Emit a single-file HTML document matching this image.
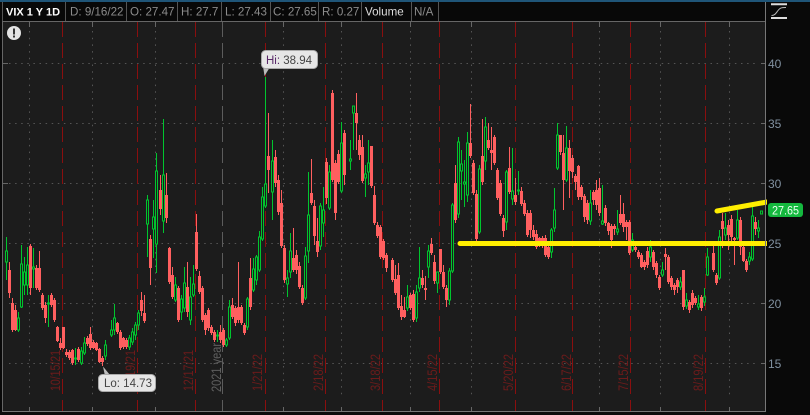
<!DOCTYPE html>
<html><head><meta charset="utf-8"><style>
html,body{margin:0;padding:0;background:#0a0a0a}
#w{position:relative;width:810px;height:415px;overflow:hidden;background:#0a0a0a;font-family:"Liberation Sans",sans-serif}
svg{position:absolute;left:0;top:0}
</style></head><body><div id="w">
<svg width="810" height="415" viewBox="0 0 810 415" font-family="Liberation Sans, sans-serif">
<rect x="0" y="0" width="810" height="415" fill="#090909"/>
<rect x="0" y="0" width="810" height="2" fill="#1f5578"/>
<rect x="3" y="22" width="762" height="389" fill="#1c1c1c"/>
<rect x="0" y="411" width="766" height="4" fill="#0c0c0c"/>
<g stroke="#555" stroke-width="1" stroke-dasharray="1.5 5.2" fill="none">
<path d="M29.5 31V398M92.5 31V398M155.5 31V398M283.5 31V398M341.5 31V398M410.5 31V398M471.5 31V398M599.5 31V398M660.5 31V398M729.5 31V398"/>
<path stroke-dasharray="1.5 4.6" d="M9 63.5H756M9 123.5H756M9 183.5H756M9 243.5H756M9 303.5H756M9 363.5H756"/>
</g>
<path stroke="#666" fill="none" d="M29.5 22V27M92.5 22V27M155.5 22V27M283.5 22V27M341.5 22V27M410.5 22V27M471.5 22V27M599.5 22V27M660.5 22V27M729.5 22V27M29.5 407V411M92.5 407V411M155.5 407V411M283.5 407V411M341.5 407V411M410.5 407V411M471.5 407V411M599.5 407V411M660.5 407V411M729.5 407V411M3 183.5H8M3 63.5H8M761 63.5H765M761 123.5H765M761 183.5H765M761 243.5H765M761 303.5H765M761 363.5H765"/>
<g stroke="#8a0f0f" stroke-width="1" stroke-dasharray="15 6" fill="none">
<path d="M62.5 22V411M137.5 22V411M195.5 22V411M265.5 22V411M325.5 22V411M382.5 22V411M439.5 22V411M515.5 22V411M572.5 22V411M630.5 22V411M705.5 22V411"/>
<path stroke="#5c5c5c" d="M222.5 22V411"/>
</g>
<g font-size="13.5" fill="#6c1b1b" text-anchor="start">
<text transform="translate(60,391) rotate(-90)" textLength="41" lengthAdjust="spacingAndGlyphs">10/15/21</text>
<text transform="translate(135,391) rotate(-90)" textLength="41" lengthAdjust="spacingAndGlyphs">11/19/21</text>
<text transform="translate(193,391) rotate(-90)" textLength="41" lengthAdjust="spacingAndGlyphs">12/17/21</text>
<text transform="translate(221,392) rotate(-90)" fill="#5f5f5f" textLength="49" lengthAdjust="spacingAndGlyphs">2021 year</text>
<text transform="translate(262,391) rotate(-90)" textLength="37" lengthAdjust="spacingAndGlyphs">1/21/22</text>
<text transform="translate(323,391) rotate(-90)" textLength="37" lengthAdjust="spacingAndGlyphs">2/18/22</text>
<text transform="translate(380,391) rotate(-90)" textLength="37" lengthAdjust="spacingAndGlyphs">3/18/22</text>
<text transform="translate(437,391) rotate(-90)" textLength="37" lengthAdjust="spacingAndGlyphs">4/15/22</text>
<text transform="translate(513,391) rotate(-90)" textLength="37" lengthAdjust="spacingAndGlyphs">5/20/22</text>
<text transform="translate(571,391) rotate(-90)" textLength="37" lengthAdjust="spacingAndGlyphs">6/17/22</text>
<text transform="translate(628,391) rotate(-90)" textLength="37" lengthAdjust="spacingAndGlyphs">7/15/22</text>
<text transform="translate(703,391) rotate(-90)" textLength="37" lengthAdjust="spacingAndGlyphs">8/19/22</text>
</g>
<g transform="translate(.5,0)" fill="none">
<path stroke="#ff5f5f" stroke-width="1" d="M9 262V298M12 298V332M15 305V331M30 244V295M36 265V290M39 251V292M42 293V310M45 302V323M51 293V307M54 298V322M57 326V342M60 338V350M63 327V349M66 349V357M69 350V360M72 349V365M78 347V362M87 336V346M90 327V350M93 340V349M96 342V351M99 348V363M102 356V366M117 322V334M120 330V350M123 337V349M126 338V349M141 292V316M144 295V323M150 235V285M160 175V215M166 173V223M169 247V284M172 267V299M178 286V322M187 262V317M196 214V271M199 271V294M202 286V322M205 313V335M208 308V331M211 325V335M214 330V342M220 325V343M223 328V347M232 298V319M235 306V326M238 262V323M241 305V325M244 323V335M250 258V310M268 113V193M275 150V187M278 175V215M281 190V248M284 245V283M293 228V272M296 250V274M299 262V289M302 285V305M311 159V205M314 200V245M317 218V257M326 158V204M332 90V182M335 160V220M338 150V184M344 130V185M356 93V150M359 135V160M362 135V183M371 146V188M374 186V225M377 222V238M380 225V259M383 239V260M386 253V272M392 258V282M395 265V295M398 263V310M401 295V320M404 297V318M410 293V310M413 290V322M422 270V288M425 276V300M431 238V255M434 255V284M440 249V274M443 265V289M446 285V307M455 165V223M470 104V158M473 160V195M476 190V244M482 119V185M488 123V150M491 127V170M494 135V165M497 168V200M500 180V216M503 215V237M509 147V194M515 178V205M521 187V206M524 200V216M527 210V237M530 210V238M533 225V240M536 230V249M539 237V247M542 236V248M545 235V257M548 245V259M560 135V155M563 135V210M569 140V198M572 155V178M575 174V190M578 165V200M581 185V200M584 194V222M587 200V224M593 190V205M596 180V210M599 178V216M605 205V226M608 222V235M611 224V248M614 224V235M620 195V225M623 203V232M626 220V240M629 220V255M635 245V252M638 250V259M641 253V268M644 260V270M647 247V268M653 250V270M656 261V278M659 275V290M665 248V270M668 255V284M671 276V290M674 283V295M677 278V293M683 270V310M689 300V313M692 290V308M695 296V305M701 295V311M713 246V272M716 273V285M722 213V248M728 220V250M731 215V243M734 237V265M740 217V255M743 245V262M746 259V272M755 217V235"/>
<path stroke="#ff5f5f" stroke-width="3" d="M9 270V293M12 303V330M15 310V330M30 246V288M36 268V288M39 268V290M42 295V308M45 305V318M51 295V305M54 300V320M57 327V341M60 343V348M63 327V348M66 352V355M69 352V358M72 350V363M78 349V360M87 338V344M90 334V348M93 342V348M96 343V350M99 349V362M102 358V362M117 323V332M120 332V348M123 338V347M126 340V347M141 300V311M144 313V321M150 239V268M160 190V209M166 195V218M169 248V282M172 275V297M178 288V320M187 287V312M196 232V269M199 276V292M202 288V320M205 315V330M208 310V328M211 327V333M214 332V340M220 332V340M223 330V345M232 305V317M235 308V323M238 307V320M241 307V323M244 325V333M250 278V307M268 156V170M275 157V183M278 180V212M281 203V246M284 248V280M293 258V270M296 255V270M299 266V287M302 288V303M311 193V203M314 206V236M317 241V252M326 162V198M332 93V180M335 163V213M338 154V182M344 133V175M356 113V123M359 140V155M362 147V181M371 146V186M374 195V223M377 225V236M380 227V257M383 241V258M386 255V268M392 260V280M395 279V293M398 275V308M401 306V317M404 310V317M410 295V308M413 294V320M422 278V285M425 288V290M431 244V253M434 262V281M440 249V272M443 272V287M446 288V300M455 183V220M470 143V156M473 163V193M476 194V239M482 156V182M488 140V148M491 150V153M494 137V163M497 170V198M500 183V214M503 218V231M509 168V192M515 195V202M521 191V204M524 203V214M527 213V235M530 213V230M533 230V237M536 234V247M539 238V245M542 238V246M545 238V255M548 247V257M560 135V152M563 153V180M569 148V171M572 158V172M575 176V182M578 166V197M581 187V197M584 196V217M587 203V220M593 192V200M596 190V205M599 188V213M605 208V223M608 223V231M611 226V240M614 226V229M620 214V223M623 214V227M626 222V227M629 222V253M635 247V250M638 252V257M641 255V267M644 262V267M647 251V265M653 252V267M656 263V275M659 277V288M665 254V257M668 257V282M671 278V287M674 285V290M677 280V287M683 270V307M689 302V310M692 293V305M695 298V303M701 297V308M713 253V270M716 275V283M722 221V229M728 225V235M731 219V237M734 238V240M740 220V247M743 247V261M746 261V270M755 222V229"/>
<path stroke="#00c52e" stroke-width="1" d="M6 237V280M18 312V332M21 245V308M24 257V295M27 247V295M33 248V288M48 295V327M75 348V365M81 347V365M84 337V355M105 340V360M111 320V337M114 304V335M129 335V350M132 328V345M135 322V340M138 310V330M147 195V200M147 224V257M153 200V217M153 229V258M156 153V171M156 244V273M163 119V175M163 221V233M175 277V302M181 295V320M184 267V312M190 277V325M193 265V297M217 330V342M226 338V347M229 300V340M247 297V330M253 258V292M256 255V285M259 231V272M262 187V241M265 77V208M272 140V220M287 270V297M290 233V278M305 247V300M308 172V215M308 251V263M320 203V250M323 187V237M329 165V210M341 122V193M350 140V170M353 106V150M365 165V197M368 140V185M407 285V311M416 285V322M419 247V292M428 245V278M437 272V293M449 268V305M452 203V273M458 137V218M461 150V200M464 160V207M467 132V202M479 165V234M485 117V170M506 170V230M512 148V205M518 171V195M551 228V258M554 188V232M557 123V170M566 126V182M590 190V225M602 185V225M617 210V235M632 233V252M650 240V262M662 262V277M680 277V290M686 293V309M698 295V310M704 288V306M707 248V276M719 230V280M725 213V240M737 210V240M749 252V265M752 207V261M758 220V238"/>
<path stroke="#00c52e" stroke-width="1" fill="#1c1c1c" d="M5 251h2v11h-2zM17 318h2v12h-2zM20 264h2v43h-2zM23 272h2v13h-2zM26 265h2v20h-2zM32 267h2v2h-2zM47 303h2v1h-2zM74 358h2v1h-2zM80 351h2v12h-2zM83 343h2v10h-2zM104 345h2v11h-2zM110 330h2v5h-2zM113 318h2v12h-2zM128 338h2v9h-2zM131 332h2v10h-2zM134 325h2v10h-2zM137 313h2v12h-2zM146 200h2v24h-2zM152 217h2v12h-2zM155 171h2v73h-2zM162 175h2v46h-2zM174 285h2v15h-2zM180 299h2v13h-2zM183 283h2v25h-2zM189 297h2v23h-2zM192 284h2v11h-2zM216 335h2v1h-2zM225 340h2v5h-2zM228 307h2v31h-2zM246 299h2v28h-2zM252 269h2v21h-2zM255 257h2v23h-2zM258 237h2v33h-2zM261 197h2v42h-2zM264 184h2v22h-2zM271 161h2v31h-2zM286 278h2v6h-2zM289 251h2v21h-2zM304 256h2v42h-2zM307 215h2v36h-2zM319 206h2v40h-2zM322 210h2v13h-2zM328 172h2v36h-2zM340 143h2v48h-2zM349 159h2v2h-2zM352 106h2v7h-2zM364 174h2v4h-2zM367 163h2v9h-2zM406 297h2v11h-2zM415 292h2v26h-2zM418 278h2v10h-2zM427 251h2v16h-2zM436 272h2v11h-2zM448 271h2v29h-2zM451 205h2v66h-2zM457 142h2v72h-2zM460 164h2v7h-2zM463 182h2v2h-2zM466 143h2v52h-2zM478 169h2v63h-2zM484 127h2v34h-2zM505 172h2v50h-2zM511 191h2v8h-2zM517 190h2v1h-2zM550 230h2v22h-2zM553 210h2v18h-2zM556 135h2v33h-2zM565 148h2v32h-2zM589 203h2v18h-2zM601 221h2v3h-2zM616 229h2v3h-2zM631 240h2v10h-2zM649 247h2v10h-2zM661 270h2v5h-2zM679 282h2v5h-2zM685 300h2v6h-2zM697 304h2v3h-2zM703 297h2v5h-2zM706 257h2v18h-2zM718 237h2v41h-2zM724 228h2v7h-2zM736 220h2v18h-2zM748 257h2v4h-2zM751 216h2v43h-2zM757 228h2v3h-2zM760 211h2v3h-2z"/>
</g>
<path d="M460 243.5H767" stroke="#ffee00" stroke-width="5" stroke-linecap="round" fill="none"/>
<path d="M717 211L767 202" stroke="#ffee00" stroke-width="5" stroke-linecap="round" fill="none"/>
<rect x="2" y="21" width="764" height="1" fill="#666"/>
<rect x="2" y="21" width="1" height="391" fill="#666"/>
<rect x="765" y="2" width="1" height="410" fill="#777"/>
<rect x="767" y="2" width="43" height="413" fill="#090909"/>
<rect x="2" y="411" width="764" height="1" fill="#777"/>
<rect x="3" y="2" width="762" height="19" fill="#080808"/>
<path stroke="#555" d="M2.5 2V21M65.5 2V21M126.5 2V21M177.5 2V21M221.5 2V21M270.5 2V21M318.5 2V21M361.5 2V21M411.5 2V21M438.5 2V21"/>
<g font-size="11.6" fill="#8c8c8c">
<text x="6" y="15.5" fill="#fff" font-weight="bold" font-size="11">VIX 1 Y 1D</text>
<text x="70" y="15.5">D: 9/16/22</text>
<text x="130" y="15.5">O: 27.47</text>
<text x="181" y="15.5">H: 27.7</text>
<text x="225" y="15.5">L: 27.43</text>
<text x="273" y="15.5">C: 27.65</text>
<text x="322" y="15.5">R: 0.27</text>
<text x="365" y="15.5" fill="#ddd">Volume</text>
<text x="414" y="15.5">N/A</text>
</g>
<g font-size="12" fill="#80909f">
<text x="768" y="68">40</text><text x="768" y="128">35</text><text x="768" y="188">30</text><text x="768" y="248">25</text><text x="768" y="308">20</text><text x="768" y="368">15</text>
</g>
<path d="M771 4.2H787M771 18H787" stroke="#ddd" stroke-width="2" fill="none"/>
<path d="M771.5 15.5C775 15.5 776 13 778 10.5S781 7.5 786 7.5" stroke="#bbb" stroke-width="1" fill="none"/>
<rect x="768" y="203" width="35" height="14" rx="3" fill="#14b83e"/>
<text x="772" y="214.5" font-size="12" fill="#eafff0" textLength="27" lengthAdjust="spacingAndGlyphs">27.65</text>
<circle cx="14" cy="33" r="7" fill="#e4e4e4"/>
<rect x="13" y="28.5" width="2" height="6" fill="#333"/>
<rect x="13" y="35.5" width="2" height="2" fill="#333"/>
<path d="M263 66L264.5 76L270 67Z" fill="#bbb"/>
<rect x="261.5" y="50.5" width="56" height="18" rx="4" fill="#e6e6e6" stroke="#aaa"/>
<text x="266" y="64" font-size="11.5" fill="#444"><tspan fill="#5a2a6a">Hi:</tspan> 38.94</text>
<path d="M103 366.5L110 375L105 376Z" fill="#bbb"/>
<rect x="98.5" y="374.5" width="57" height="17" rx="4" fill="#e6e6e6" stroke="#aaa"/>
<text x="104" y="387" font-size="11.5" fill="#444">Lo: 14.73</text>
</svg>
</div></body></html>
